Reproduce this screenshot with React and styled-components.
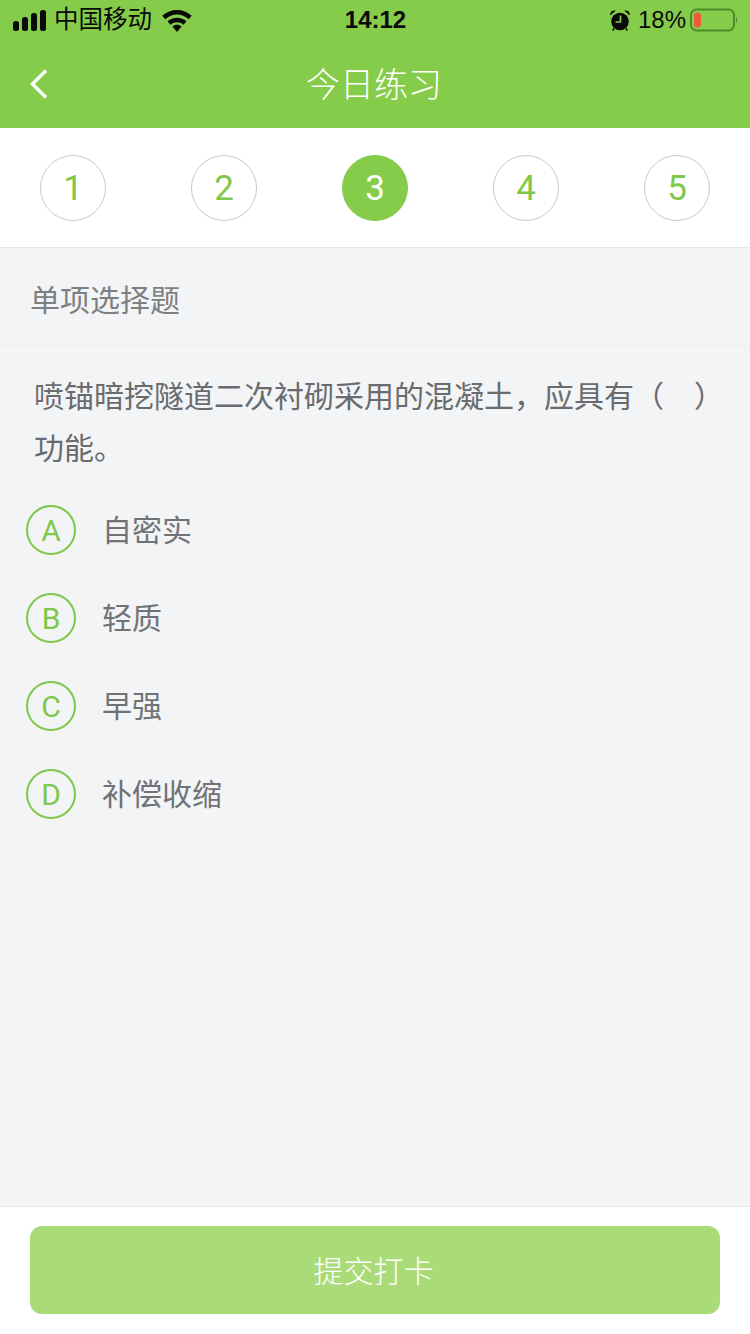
import React from "react";
import styled, { createGlobalStyle } from "styled-components";

const GREEN = "#85cc4a";
const ACCENT = "#7fc84a";
const FONT = '"Liberation Sans", "Noto Sans CJK SC", sans-serif';
const LATIN = 'Roboto, "Liberation Sans", sans-serif';

const Global = createGlobalStyle`
  html, body { margin: 0; padding: 0; background: #f3f4f6; }
  * { box-sizing: border-box; }
  body { font-family: ${FONT}; }
`;

const Page = styled.div`
  width: 750px;
  height: 1334px;
  display: flex;
  flex-direction: column;
  background: #f3f4f6;
  overflow: hidden;
`;

const Header = styled.header`
  height: 128px;
  flex: none;
  background: ${GREEN};
  display: flex;
  flex-direction: column;
`;

const StatusBar = styled.div`
  height: 40px;
  flex: none;
  display: grid;
  grid-template-columns: 1fr auto 1fr;
  align-items: center;
  padding: 0 12px 0 13px;
  color: #0a0a0a;
`;

const StatusGroup = styled.div`
  display: flex;
  align-items: center;
  justify-content: ${(p) => (p.$end ? "flex-end" : "flex-start")};
`;

const Carrier = styled.span`
  font-size: 24.5px;
  line-height: 40px;
  margin: 0 10px 0 7px;
`;

const Clock = styled.span`
  font-size: 24px;
  font-weight: 700;
  line-height: 40px;
`;

const Percent = styled.span`
  font-size: 24px;
  line-height: 40px;
  margin: 0 4px 0 8px;
`;

const NavBar = styled.div`
  flex: 1;
  position: relative;
  display: flex;
  align-items: center;
  justify-content: center;
`;

const BackButton = styled.div`
  position: absolute;
  left: 29px;
  top: 28px;
  display: flex;
`;

const Title = styled.h1`
  margin: 0;
  font-size: 34px;
  font-weight: 300;
  line-height: 88px;
  padding: 1px 2px 0 0;
  color: #fff;
`;

const Steps = styled.div`
  height: 120px;
  flex: none;
  display: flex;
  justify-content: space-between;
  align-items: flex-start;
  padding: 27px 40px 0;
  background: #fff;
  border-bottom: 1px solid #e8e9eb;
`;

const Step = styled.div`
  width: 66px;
  height: 66px;
  border-radius: 50%;
  display: flex;
  align-items: center;
  justify-content: center;
  font-family: ${LATIN};
  font-size: 35px;
  font-weight: 400;
  color: ${(p) => (p.$active ? "#fff" : ACCENT)};
  background: ${(p) => (p.$active ? GREEN : "#fff")};
  border: 1px solid ${(p) => (p.$active ? GREEN : "#c9c9c9")};
`;

const SectionLabel = styled.div`
  height: 98px;
  flex: none;
  padding: 3px 0 0 30px;
  display: flex;
  align-items: center;
  font-size: 30px;
  font-weight: 400;
  color: #7d7f82;
  border-bottom: 1px solid #ebecee;
`;

const Question = styled.p`
  margin: 0;
  padding: 25px 20px 0 34px;
  font-size: 30px;
  line-height: 52px;
  font-weight: 400;
  color: #696b6e;
`;

const Options = styled.div`
  flex: 1;
  padding-top: 11px;
  display: flex;
  flex-direction: column;
`;

const Option = styled.div`
  height: 88px;
  flex: none;
  display: flex;
  align-items: center;
  padding-left: 26px;
`;

const Badge = styled.div`
  width: 50px;
  height: 50px;
  flex: none;
  border-radius: 50%;
  border: 2px solid ${ACCENT};
  display: flex;
  align-items: center;
  justify-content: center;
  font-family: ${LATIN};
  font-size: 30px;
  font-weight: 400;
  color: ${ACCENT};
`;

const OptionText = styled.span`
  margin-left: 26px;
  padding-bottom: 4px;
  font-size: 30px;
  font-weight: 400;
  color: #707275;
`;

const Footer = styled.footer`
  height: 128px;
  flex: none;
  padding: 19px 30px 0;
  background: #fff;
  border-top: 1px solid #e8e9eb;
`;

const Submit = styled.div`
  height: 88px;
  padding: 0 3px 3px 0;
  border-radius: 12px;
  background: #aadb79;
  display: flex;
  align-items: center;
  justify-content: center;
  font-size: 30px;
  font-weight: 300;
  color: #fff;
`;

const Signal = () => (
  <svg width="34" height="21" viewBox="0 0 34 21">
    <rect x="0" y="11" width="6" height="10" rx="2.5" fill="#0a0a0a" />
    <rect x="9" y="7" width="6" height="14" rx="2.5" fill="#0a0a0a" />
    <rect x="18" y="3" width="6" height="18" rx="2.5" fill="#0a0a0a" />
    <rect x="27" y="0" width="6" height="21" rx="2.5" fill="#0a0a0a" />
  </svg>
);

const Wifi = () => (
  <svg width="30" height="23" viewBox="0 0 30 23" fill="none">
    <path d="M1.8 8.5C9.5 1.5 20.5 1.5 28.2 8.5" stroke="#0a0a0a" strokeWidth="4.4" />
    <path d="M7 14C11.5 10 18.5 10 23 14" stroke="#0a0a0a" strokeWidth="4.4" />
    <path d="M10.4 17.4C13 15.2 17 15.2 19.6 17.4L15 23Z" fill="#0a0a0a" />
  </svg>
);

const Alarm = () => (
  <svg width="20" height="21" viewBox="0 0 20 21">
    <circle cx="10" cy="11.5" r="8.8" fill="#0a0a0a" />
    <path d="M0.2 5.5C-0.2 2 2.4 -0.2 5.6 0.8ZM19.8 5.5C20.2 2 17.6 -0.2 14.4 0.8Z" fill="#0a0a0a" />
    <path d="M10.5 5.5V12H5.5" stroke="#85cc4a" strokeWidth="1.7" fill="none" />
    <path d="M4 18.5L2.8 20.6M16 18.5L17.2 20.6" stroke="#0a0a0a" strokeWidth="1.6" />
  </svg>
);

const Battery = () => (
  <svg width="48" height="24" viewBox="0 0 48 24">
    <rect x="1" y="1.5" width="43" height="21" rx="5.5" fill="none" stroke="#4c8a2a" strokeWidth="2" />
    <rect x="4" y="4.5" width="7" height="15" rx="3" fill="#ee5a3a" />
    <path d="M46 9C47.5 9.5 47.5 14.5 46 15Z" fill="#4c8a2a" />
  </svg>
);

const Back = () => (
  <svg width="20" height="32" viewBox="0 0 20 32" fill="none">
    <path d="M17 2.5L3.5 16L17 29.5" stroke="#fff" strokeWidth="3.4" />
  </svg>
);

const steps = [1, 2, 3, 4, 5];
const options = [
  ["A", "自密实"],
  ["B", "轻质"],
  ["C", "早强"],
  ["D", "补偿收缩"],
];

export default function App() {
  return (
    <Page>
      <Global />
      <Header>
        <StatusBar>
          <StatusGroup>
            <Signal />
            <Carrier>中国移动</Carrier>
            <Wifi />
          </StatusGroup>
          <Clock>14:12</Clock>
          <StatusGroup $end>
            <Alarm />
            <Percent>18%</Percent>
            <Battery />
          </StatusGroup>
        </StatusBar>
        <NavBar>
          <BackButton>
            <Back />
          </BackButton>
          <Title>今日练习</Title>
        </NavBar>
      </Header>
      <Steps>
        {steps.map((n) => (
          <Step key={n} $active={n === 3}>
            {n}
          </Step>
        ))}
      </Steps>
      <SectionLabel>单项选择题</SectionLabel>
      <Question>喷锚暗挖隧道二次衬砌采用的混凝土，应具有（　）功能。</Question>
      <Options>
        {options.map(([k, t]) => (
          <Option key={k}>
            <Badge>{k}</Badge>
            <OptionText>{t}</OptionText>
          </Option>
        ))}
      </Options>
      <Footer>
        <Submit>提交打卡</Submit>
      </Footer>
    </Page>
  );
}
